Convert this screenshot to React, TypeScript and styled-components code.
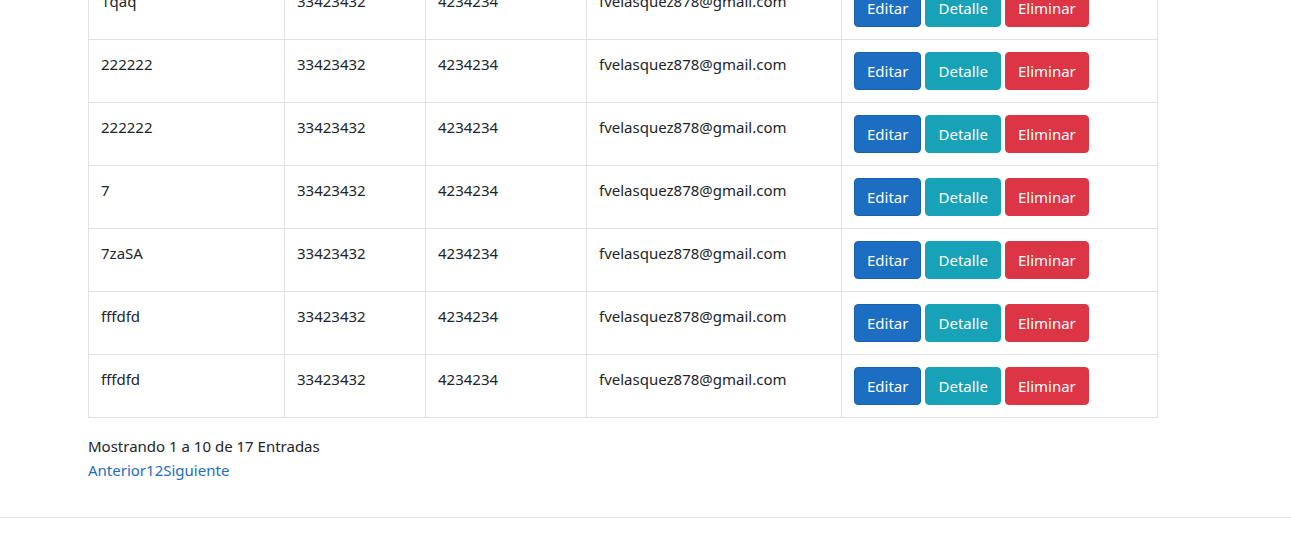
import React from "react";
import styled, { createGlobalStyle } from "styled-components";

const Global = createGlobalStyle`
  html, body { margin: 0; padding: 0; background: #fff; }
  body {
    font-family: "Noto Sans", "Open Sans", sans-serif;
    font-size: 15px;
    line-height: 24px;
    color: #212529;
  }
  * { box-sizing: border-box; }
`;

const Viewport = styled.div`
  height: 541px;
  overflow: hidden;
`;

const Main = styled.main`
  padding: 0 88px;
  margin-top: -24px;
`;

const Table = styled.table`
  border-collapse: collapse;
  width: 1069px;
  table-layout: fixed;
  margin-bottom: 16px;
`;

const Cell = styled.td`
  border: 1px solid #dee2e6;
  padding: 12px;
  vertical-align: top;
  white-space: nowrap;
  overflow: hidden;
`;

const ActionCell = styled(Cell)`
  padding: 12px;
`;

const Btn = styled.button<{ $bg: string; $border: string }>`
  display: inline-block;
  font-family: inherit;
  font-size: 15px;
  line-height: 24px;
  padding: 6px 12px;
  border: 1px solid ${(p) => p.$border};
  border-radius: 4px;
  background: ${(p) => p.$bg};
  color: #fff;
  margin-right: 4px;
  cursor: pointer;
`;

const Info = styled.p`
  margin: 0;
`;

const Pager = styled.div`
  display: flex;
  margin-bottom: 35px;
`;

const PageLink = styled.a`
  color: #1b6ec2;
  text-decoration: none;
  cursor: pointer;
`;

const Footer = styled.footer`
  border-top: 1px solid #e5e5e5;
  height: 40px;
`;

const rows = [
  ["1qaq", "33423432", "4234234", "fvelasquez878@gmail.com"],
  ["222222", "33423432", "4234234", "fvelasquez878@gmail.com"],
  ["222222", "33423432", "4234234", "fvelasquez878@gmail.com"],
  ["7", "33423432", "4234234", "fvelasquez878@gmail.com"],
  ["7zaSA", "33423432", "4234234", "fvelasquez878@gmail.com"],
  ["fffdfd", "33423432", "4234234", "fvelasquez878@gmail.com"],
  ["fffdfd", "33423432", "4234234", "fvelasquez878@gmail.com"],
];

export default function App() {
  return (
    <Viewport>
      <Global />
      <Main>
        <Table>
          <colgroup>
            <col style={{ width: 196 }} />
            <col style={{ width: 141 }} />
            <col style={{ width: 161 }} />
            <col style={{ width: 255 }} />
            <col style={{ width: 316 }} />
          </colgroup>
          <tbody>
            {rows.map((r, i) => (
              <tr key={i}>
                <Cell>{r[0]}</Cell>
                <Cell>{r[1]}</Cell>
                <Cell>{r[2]}</Cell>
                <Cell>{r[3]}</Cell>
                <ActionCell>
                  <Btn $bg="#1b6ec2" $border="#1861ac">Editar</Btn>
                  <Btn $bg="#17a2b8" $border="#17a2b8">Detalle</Btn>
                  <Btn $bg="#dc3545" $border="#dc3545">Eliminar</Btn>
                </ActionCell>
              </tr>
            ))}
          </tbody>
        </Table>
        <Info>Mostrando 1 a 10 de 17 Entradas</Info>
        <Pager>
          <PageLink>Anterior</PageLink>
          <PageLink>1</PageLink>
          <PageLink>2</PageLink>
          <PageLink>Siguiente</PageLink>
        </Pager>
      </Main>
      <Footer />
    </Viewport>
  );
}
